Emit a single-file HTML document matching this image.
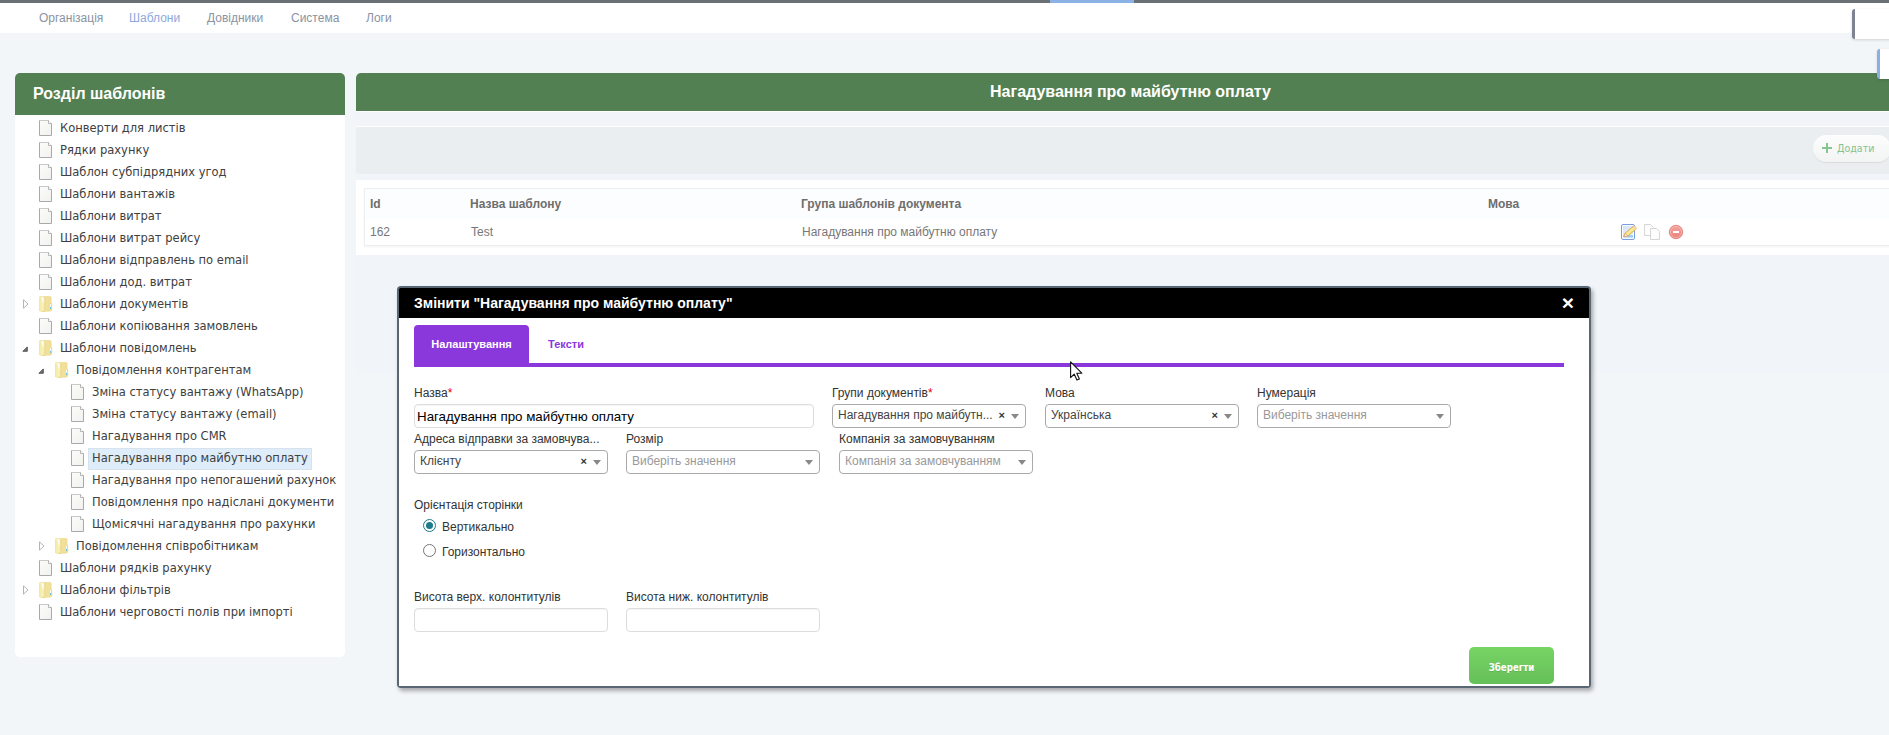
<!DOCTYPE html>
<html lang="uk">
<head>
<meta charset="utf-8">
<title>Шаблони</title>
<style>
*{box-sizing:border-box}
html,body{margin:0;padding:0}
body{width:1889px;height:735px;overflow:hidden;background:#f3f6f9;font-family:"Liberation Sans",sans-serif;font-size:12px;color:#333;position:relative}
.abs{position:absolute}
#topbar{left:0;top:0;width:1889px;height:3px;background:#6b7075}
#topbar i{position:absolute;left:1050px;top:0;width:84px;height:3px;background:#8bb2e5}
#nav{left:0;top:3px;width:1889px;height:30px;background:#fff}
#nav a{position:absolute;top:0;line-height:30px;font-size:12px;color:#8a93a3;text-decoration:none;white-space:nowrap}
#nav a.act{color:#8ea7dc}
#box1{z-index:5;left:1852px;top:9px;width:60px;height:30px;background:#fff;border-left:3px solid #7d8390;border-radius:3px 0 0 3px;box-shadow:0 1px 3px rgba(0,0,0,.15)}
#box2{z-index:5;left:1877px;top:49px;width:60px;height:30px;background:#fff;border-left:3px solid #8aaee8;border-radius:3px 0 0 3px;box-shadow:0 1px 3px rgba(0,0,0,.12)}
/* left panel */
#lp{left:15px;top:73px;width:330px;height:584px;background:#fff;border-radius:5px}
#lph{left:0;top:0;width:330px;height:42px;background:#528052;border-radius:5px 5px 0 0;color:#fff;font-weight:bold;font-size:16px;line-height:41px;padding-left:18px}
.tr{position:absolute;height:22px;line-height:22px;font-family:"DejaVu Sans Condensed","DejaVu Sans",sans-serif;font-size:12.8px;color:#404040;white-space:nowrap}
.tr span{display:block;height:22px;line-height:18px;padding:0 3px 0 3px;border:1px solid transparent}
.tr span.sel{background:#deedf9;border-color:#d6e3ee}
.fi{position:absolute;width:13px;height:16px}
.fo{position:absolute;width:14px;height:17px}
.ar{position:absolute;width:6px;height:10px}
/* right */
#rh{left:356px;top:73px;width:1548px;height:38px;background:#528052;border-radius:5px 5px 0 0;color:#fff;font-weight:bold;font-size:16px;line-height:37px;text-align:center;padding-left:1px;box-shadow:0 1px 0 #fff}
#rp{left:356px;top:112px;width:1548px;height:261px;background:#f1f4f8}
#tb{left:356px;top:126px;width:1548px;height:47px;background:#eaeef1;border-top:1px solid #fff;border-radius:3px;box-shadow:0 1px 1px rgba(0,0,0,.03)}
#add{left:1813px;top:135px;width:78px;height:27px;border-radius:14px;background:linear-gradient(#fdfdfd,#f2f3f3);box-shadow:0 1px 1px rgba(0,0,0,.08);font-family:"DejaVu Sans Condensed","DejaVu Sans",sans-serif;font-size:10.6px;color:#86c28e;line-height:27px;padding-left:24px;white-space:nowrap}
#add:before{content:"";position:absolute;left:9px;top:12px;width:10px;height:2px;background:#86c58d}
#add:after{content:"";position:absolute;left:13px;top:8px;width:2px;height:10px;background:#86c58d}
#tc{left:356px;top:180px;width:1548px;height:75px;background:#fff}
#tbl{left:364px;top:188px;width:1540px;height:58px;background:#fff;border:1px solid #eceef0;box-shadow:0 1px 2px rgba(0,0,0,.05)}
#th{left:0;top:0;width:100%;height:30px;background:#fcfdfe}
.hc{position:absolute;top:0;line-height:31px;font-weight:bold;font-size:12px;color:#6e6e6e}
.dc{position:absolute;top:30px;line-height:27px;font-size:12px;color:#777}
/* modal */
#md{left:397px;top:286px;width:1194px;height:402px;background:#586773;border-radius:4px;box-shadow:2px 3px 4px rgba(0,0,0,.32)}
#mb{left:2px;top:2px;width:1190px;height:398px;background:#fff}
#mh{left:2px;top:2px;width:1190px;height:30px;background:#000;border-radius:1px 1px 0 0;color:#fff;font-weight:bold;font-size:14px;line-height:30px;padding-left:15px}
#cls{left:1558px;top:291px;width:20px;height:24px;line-height:24px;text-align:center;color:#fff;font-weight:bold;font-size:21px}
#tab1{left:414px;top:325px;width:115px;height:40px;background:#8a38db;border-radius:4px 4px 0 0;color:#fff;font-weight:bold;font-size:11px;line-height:38px;text-align:center}
#tab2{left:548px;top:325px;height:38px;line-height:38px;color:#8a38db;font-weight:bold;font-size:11px}
#tline{left:414px;top:363px;width:1150px;height:4px;background:#8a38db}
.lb{position:absolute;font-size:12px;color:#333;white-space:nowrap;line-height:14px}
.lb b{color:#e00;font-weight:normal}
.inp{position:absolute;height:24px;border:1px solid #ddd;border-radius:4px;background:#fff;box-shadow:inset 0 1px 1px rgba(0,0,0,.04);font-size:13.33px;line-height:23px;color:#000;padding-left:2px;white-space:nowrap}
.s2{position:absolute;width:194px;height:24px;border:1px solid #aaa;border-radius:4px;background:#fff;font-size:12px;line-height:20px;color:#444;padding-left:5px;white-space:nowrap}
.s2.ph{color:#999}
.s2 u{position:absolute;right:6px;top:9px;width:0;height:0;border-left:4px solid transparent;border-right:4px solid transparent;border-top:5px solid #888}
.s2 em{position:absolute;right:20px;top:0;font-style:normal;font-weight:bold;font-size:11px;color:#333;line-height:20px}
.rd{position:absolute;width:13px;height:13px;border-radius:50%;border:1px solid #767676;background:#fff}
.rd.on{border-color:#1d7a8c}
.rd.on:after{content:"";position:absolute;left:2px;top:2px;width:7px;height:7px;border-radius:50%;background:#1d7a8c}
#save{left:1469px;top:647px;width:85px;height:37px;border-radius:5px;background:linear-gradient(#77d464,#66bf59);color:#fff;font-family:"DejaVu Sans Condensed","DejaVu Sans",sans-serif;font-weight:bold;font-size:9.6px;line-height:41px;text-align:center;text-shadow:0 1px 0 rgba(0,0,0,.1)}
</style>
</head>
<body>
<div id="topbar" class="abs"><i></i></div>
<div id="nav" class="abs">
<a style="left:39px">Організація</a>
<a class="act" style="left:129px">Шаблони</a>
<a style="left:207px">Довідники</a>
<a style="left:291px">Система</a>
<a style="left:366px">Логи</a>
</div>
<div id="box1" class="abs"></div>
<div id="box2" class="abs"></div>

<div id="lp" class="abs">
<div id="lph" class="abs">Розділ шаблонів</div>
<!--TREE-START-->
<svg width="0" height="0" style="position:absolute"><defs><linearGradient id="gf" x1="0" y1="0" x2="1" y2="1"><stop offset="0" stop-color="#fcfcfb"/><stop offset="1" stop-color="#f1f1ee"/></linearGradient><linearGradient id="gd" x1="0" y1="0" x2="1" y2="0"><stop offset="0" stop-color="#f4e9a6"/><stop offset=".3" stop-color="#f9f1b6"/><stop offset=".5" stop-color="#f1e29c"/><stop offset="1" stop-color="#f0de97"/></linearGradient></defs></svg>
<svg class="fi" style="left:24px;top:47px" viewBox="0 0 13 16"><path d="M.5 .5H9.5L12.5 3.5V15.5H.5Z" fill="url(#gf)" stroke="#a9a9a9"/><path d="M.5 .5H9.5L12.5 3.5" fill="none" stroke="#c9c9c9"/><path d="M9.5 .5V3.5H12.5" fill="#fff" stroke="#b5b5b5"/></svg>
<div class="tr" style="left:41px;top:45px"><span>Конверти для листів</span></div>
<svg class="fi" style="left:24px;top:69px" viewBox="0 0 13 16"><path d="M.5 .5H9.5L12.5 3.5V15.5H.5Z" fill="url(#gf)" stroke="#a9a9a9"/><path d="M.5 .5H9.5L12.5 3.5" fill="none" stroke="#c9c9c9"/><path d="M9.5 .5V3.5H12.5" fill="#fff" stroke="#b5b5b5"/></svg>
<div class="tr" style="left:41px;top:67px"><span>Рядки рахунку</span></div>
<svg class="fi" style="left:24px;top:91px" viewBox="0 0 13 16"><path d="M.5 .5H9.5L12.5 3.5V15.5H.5Z" fill="url(#gf)" stroke="#a9a9a9"/><path d="M.5 .5H9.5L12.5 3.5" fill="none" stroke="#c9c9c9"/><path d="M9.5 .5V3.5H12.5" fill="#fff" stroke="#b5b5b5"/></svg>
<div class="tr" style="left:41px;top:89px"><span>Шаблон субпідрядних угод</span></div>
<svg class="fi" style="left:24px;top:113px" viewBox="0 0 13 16"><path d="M.5 .5H9.5L12.5 3.5V15.5H.5Z" fill="url(#gf)" stroke="#a9a9a9"/><path d="M.5 .5H9.5L12.5 3.5" fill="none" stroke="#c9c9c9"/><path d="M9.5 .5V3.5H12.5" fill="#fff" stroke="#b5b5b5"/></svg>
<div class="tr" style="left:41px;top:111px"><span>Шаблони вантажів</span></div>
<svg class="fi" style="left:24px;top:135px" viewBox="0 0 13 16"><path d="M.5 .5H9.5L12.5 3.5V15.5H.5Z" fill="url(#gf)" stroke="#a9a9a9"/><path d="M.5 .5H9.5L12.5 3.5" fill="none" stroke="#c9c9c9"/><path d="M9.5 .5V3.5H12.5" fill="#fff" stroke="#b5b5b5"/></svg>
<div class="tr" style="left:41px;top:133px"><span>Шаблони витрат</span></div>
<svg class="fi" style="left:24px;top:157px" viewBox="0 0 13 16"><path d="M.5 .5H9.5L12.5 3.5V15.5H.5Z" fill="url(#gf)" stroke="#a9a9a9"/><path d="M.5 .5H9.5L12.5 3.5" fill="none" stroke="#c9c9c9"/><path d="M9.5 .5V3.5H12.5" fill="#fff" stroke="#b5b5b5"/></svg>
<div class="tr" style="left:41px;top:155px"><span>Шаблони витрат рейсу</span></div>
<svg class="fi" style="left:24px;top:179px" viewBox="0 0 13 16"><path d="M.5 .5H9.5L12.5 3.5V15.5H.5Z" fill="url(#gf)" stroke="#a9a9a9"/><path d="M.5 .5H9.5L12.5 3.5" fill="none" stroke="#c9c9c9"/><path d="M9.5 .5V3.5H12.5" fill="#fff" stroke="#b5b5b5"/></svg>
<div class="tr" style="left:41px;top:177px"><span>Шаблони відправлень по email</span></div>
<svg class="fi" style="left:24px;top:201px" viewBox="0 0 13 16"><path d="M.5 .5H9.5L12.5 3.5V15.5H.5Z" fill="url(#gf)" stroke="#a9a9a9"/><path d="M.5 .5H9.5L12.5 3.5" fill="none" stroke="#c9c9c9"/><path d="M9.5 .5V3.5H12.5" fill="#fff" stroke="#b5b5b5"/></svg>
<div class="tr" style="left:41px;top:199px"><span>Шаблони дод. витрат</span></div>
<svg class="fo" style="left:24px;top:223px" viewBox="0 0 14 17"><rect x="11" y="7" width="2.2" height="7.5" rx=".8" fill="#ecd88a"/><rect x=".2" y=".3" width="12" height="15" rx="1.6" fill="url(#gd)" stroke="#ead68a" stroke-width=".5"/><rect x="3.2" y="15" width="3" height="1" rx=".4" fill="#ead68a"/><rect x="5.6" y="1" width=".9" height="14" fill="#e6d48c" opacity=".7"/><path d="M2.3 1.2L4.6 1.4V7.2L4 7.2Z" fill="#fff" opacity=".95"/><rect x="11" y="8" width="1.1" height="3" fill="#fbfbf6"/><rect x="11" y="11" width="1.1" height="2" fill="#6cc3e6"/></svg>
<svg class="ar" style="left:7.5px;top:226px" viewBox="0 0 6 10"><path d="M.5 .8L5 5L.5 9.2Z" fill="#fff" stroke="#b4b4b4" stroke-width="1"/></svg>
<div class="tr" style="left:41px;top:221px"><span>Шаблони документів</span></div>
<svg class="fi" style="left:24px;top:245px" viewBox="0 0 13 16"><path d="M.5 .5H9.5L12.5 3.5V15.5H.5Z" fill="url(#gf)" stroke="#a9a9a9"/><path d="M.5 .5H9.5L12.5 3.5" fill="none" stroke="#c9c9c9"/><path d="M9.5 .5V3.5H12.5" fill="#fff" stroke="#b5b5b5"/></svg>
<div class="tr" style="left:41px;top:243px"><span>Шаблони копіювання замовлень</span></div>
<svg class="fo" style="left:24px;top:267px" viewBox="0 0 14 17"><rect x="11" y="7" width="2.2" height="7.5" rx=".8" fill="#ecd88a"/><rect x=".2" y=".3" width="12" height="15" rx="1.6" fill="url(#gd)" stroke="#ead68a" stroke-width=".5"/><rect x="3.2" y="15" width="3" height="1" rx=".4" fill="#ead68a"/><rect x="5.6" y="1" width=".9" height="14" fill="#e6d48c" opacity=".7"/><path d="M2.3 1.2L4.6 1.4V7.2L4 7.2Z" fill="#fff" opacity=".95"/><rect x="11" y="8" width="1.1" height="3" fill="#fbfbf6"/><rect x="11" y="11" width="1.1" height="2" fill="#6cc3e6"/></svg>
<svg class="ar" style="left:7px;top:272.5px;width:6px;height:6px" viewBox="0 0 6 6"><path d="M5.3 .9V5.3H.9Z" fill="#777" stroke="#3c3c3c" stroke-width=".8" stroke-linejoin="round"/></svg>
<div class="tr" style="left:41px;top:265px"><span>Шаблони повідомлень</span></div>
<svg class="fo" style="left:40px;top:289px" viewBox="0 0 14 17"><rect x="11" y="7" width="2.2" height="7.5" rx=".8" fill="#ecd88a"/><rect x=".2" y=".3" width="12" height="15" rx="1.6" fill="url(#gd)" stroke="#ead68a" stroke-width=".5"/><rect x="3.2" y="15" width="3" height="1" rx=".4" fill="#ead68a"/><rect x="5.6" y="1" width=".9" height="14" fill="#e6d48c" opacity=".7"/><path d="M2.3 1.2L4.6 1.4V7.2L4 7.2Z" fill="#fff" opacity=".95"/><rect x="11" y="8" width="1.1" height="3" fill="#fbfbf6"/><rect x="11" y="11" width="1.1" height="2" fill="#6cc3e6"/></svg>
<svg class="ar" style="left:23px;top:294.5px;width:6px;height:6px" viewBox="0 0 6 6"><path d="M5.3 .9V5.3H.9Z" fill="#777" stroke="#3c3c3c" stroke-width=".8" stroke-linejoin="round"/></svg>
<div class="tr" style="left:57px;top:287px"><span>Повідомлення контрагентам</span></div>
<svg class="fi" style="left:56px;top:311px" viewBox="0 0 13 16"><path d="M.5 .5H9.5L12.5 3.5V15.5H.5Z" fill="url(#gf)" stroke="#a9a9a9"/><path d="M.5 .5H9.5L12.5 3.5" fill="none" stroke="#c9c9c9"/><path d="M9.5 .5V3.5H12.5" fill="#fff" stroke="#b5b5b5"/></svg>
<div class="tr" style="left:73px;top:309px"><span>Зміна статусу вантажу (WhatsApp)</span></div>
<svg class="fi" style="left:56px;top:333px" viewBox="0 0 13 16"><path d="M.5 .5H9.5L12.5 3.5V15.5H.5Z" fill="url(#gf)" stroke="#a9a9a9"/><path d="M.5 .5H9.5L12.5 3.5" fill="none" stroke="#c9c9c9"/><path d="M9.5 .5V3.5H12.5" fill="#fff" stroke="#b5b5b5"/></svg>
<div class="tr" style="left:73px;top:331px"><span>Зміна статусу вантажу (email)</span></div>
<svg class="fi" style="left:56px;top:355px" viewBox="0 0 13 16"><path d="M.5 .5H9.5L12.5 3.5V15.5H.5Z" fill="url(#gf)" stroke="#a9a9a9"/><path d="M.5 .5H9.5L12.5 3.5" fill="none" stroke="#c9c9c9"/><path d="M9.5 .5V3.5H12.5" fill="#fff" stroke="#b5b5b5"/></svg>
<div class="tr" style="left:73px;top:353px"><span>Нагадування про CMR</span></div>
<svg class="fi" style="left:56px;top:377px" viewBox="0 0 13 16"><path d="M.5 .5H9.5L12.5 3.5V15.5H.5Z" fill="url(#gf)" stroke="#a9a9a9"/><path d="M.5 .5H9.5L12.5 3.5" fill="none" stroke="#c9c9c9"/><path d="M9.5 .5V3.5H12.5" fill="#fff" stroke="#b5b5b5"/></svg>
<div class="tr" style="left:73px;top:375px"><span class="sel">Нагадування про майбутню оплату</span></div>
<svg class="fi" style="left:56px;top:399px" viewBox="0 0 13 16"><path d="M.5 .5H9.5L12.5 3.5V15.5H.5Z" fill="url(#gf)" stroke="#a9a9a9"/><path d="M.5 .5H9.5L12.5 3.5" fill="none" stroke="#c9c9c9"/><path d="M9.5 .5V3.5H12.5" fill="#fff" stroke="#b5b5b5"/></svg>
<div class="tr" style="left:73px;top:397px"><span>Нагадування про непогашений рахунок</span></div>
<svg class="fi" style="left:56px;top:421px" viewBox="0 0 13 16"><path d="M.5 .5H9.5L12.5 3.5V15.5H.5Z" fill="url(#gf)" stroke="#a9a9a9"/><path d="M.5 .5H9.5L12.5 3.5" fill="none" stroke="#c9c9c9"/><path d="M9.5 .5V3.5H12.5" fill="#fff" stroke="#b5b5b5"/></svg>
<div class="tr" style="left:73px;top:419px"><span>Повідомлення про надіслані документи</span></div>
<svg class="fi" style="left:56px;top:443px" viewBox="0 0 13 16"><path d="M.5 .5H9.5L12.5 3.5V15.5H.5Z" fill="url(#gf)" stroke="#a9a9a9"/><path d="M.5 .5H9.5L12.5 3.5" fill="none" stroke="#c9c9c9"/><path d="M9.5 .5V3.5H12.5" fill="#fff" stroke="#b5b5b5"/></svg>
<div class="tr" style="left:73px;top:441px"><span>Щомісячні нагадування про рахунки</span></div>
<svg class="fo" style="left:40px;top:465px" viewBox="0 0 14 17"><rect x="11" y="7" width="2.2" height="7.5" rx=".8" fill="#ecd88a"/><rect x=".2" y=".3" width="12" height="15" rx="1.6" fill="url(#gd)" stroke="#ead68a" stroke-width=".5"/><rect x="3.2" y="15" width="3" height="1" rx=".4" fill="#ead68a"/><rect x="5.6" y="1" width=".9" height="14" fill="#e6d48c" opacity=".7"/><path d="M2.3 1.2L4.6 1.4V7.2L4 7.2Z" fill="#fff" opacity=".95"/><rect x="11" y="8" width="1.1" height="3" fill="#fbfbf6"/><rect x="11" y="11" width="1.1" height="2" fill="#6cc3e6"/></svg>
<svg class="ar" style="left:23.5px;top:468px" viewBox="0 0 6 10"><path d="M.5 .8L5 5L.5 9.2Z" fill="#fff" stroke="#b4b4b4" stroke-width="1"/></svg>
<div class="tr" style="left:57px;top:463px"><span>Повідомлення співробітникам</span></div>
<svg class="fi" style="left:24px;top:487px" viewBox="0 0 13 16"><path d="M.5 .5H9.5L12.5 3.5V15.5H.5Z" fill="url(#gf)" stroke="#a9a9a9"/><path d="M.5 .5H9.5L12.5 3.5" fill="none" stroke="#c9c9c9"/><path d="M9.5 .5V3.5H12.5" fill="#fff" stroke="#b5b5b5"/></svg>
<div class="tr" style="left:41px;top:485px"><span>Шаблони рядків рахунку</span></div>
<svg class="fo" style="left:24px;top:509px" viewBox="0 0 14 17"><rect x="11" y="7" width="2.2" height="7.5" rx=".8" fill="#ecd88a"/><rect x=".2" y=".3" width="12" height="15" rx="1.6" fill="url(#gd)" stroke="#ead68a" stroke-width=".5"/><rect x="3.2" y="15" width="3" height="1" rx=".4" fill="#ead68a"/><rect x="5.6" y="1" width=".9" height="14" fill="#e6d48c" opacity=".7"/><path d="M2.3 1.2L4.6 1.4V7.2L4 7.2Z" fill="#fff" opacity=".95"/><rect x="11" y="8" width="1.1" height="3" fill="#fbfbf6"/><rect x="11" y="11" width="1.1" height="2" fill="#6cc3e6"/></svg>
<svg class="ar" style="left:7.5px;top:512px" viewBox="0 0 6 10"><path d="M.5 .8L5 5L.5 9.2Z" fill="#fff" stroke="#b4b4b4" stroke-width="1"/></svg>
<div class="tr" style="left:41px;top:507px"><span>Шаблони фільтрів</span></div>
<svg class="fi" style="left:24px;top:531px" viewBox="0 0 13 16"><path d="M.5 .5H9.5L12.5 3.5V15.5H.5Z" fill="url(#gf)" stroke="#a9a9a9"/><path d="M.5 .5H9.5L12.5 3.5" fill="none" stroke="#c9c9c9"/><path d="M9.5 .5V3.5H12.5" fill="#fff" stroke="#b5b5b5"/></svg>
<div class="tr" style="left:41px;top:529px"><span>Шаблони черговості полів при імпорті</span></div>
<!--TREE-END-->
</div>

<div id="rh" class="abs">Нагадування про майбутню оплату</div>
<div id="rp" class="abs"></div>
<div id="tb" class="abs"></div>
<div id="add" class="abs">Додати</div>
<div id="tc" class="abs"></div>
<div id="tbl" class="abs">
<div id="th" class="abs"></div>
<div class="hc" style="left:5px">Id</div>
<div class="hc" style="left:105px">Назва шаблону</div>
<div class="hc" style="left:436px">Група шаблонів документа</div>
<div class="hc" style="left:1123px">Мова</div>
<div class="dc" style="left:5px">162</div>
<div class="dc" style="left:106px">Test</div>
<div class="dc" style="left:437px">Нагадування про майбутню оплату</div>
</div>

<svg class="abs" style="left:1620px;top:223px" width="18" height="18" viewBox="0 0 18 18">
<defs><linearGradient id="ge" x1="0" y1="0" x2="1" y2="1"><stop offset="0" stop-color="#cfe2fb"/><stop offset="1" stop-color="#eef5fe"/></linearGradient></defs>
<rect x="1.5" y="1.5" width="13" height="15" rx="1.5" fill="#fff" stroke="#7b9fdc"/>
<rect x="3" y="3" width="10" height="9" fill="url(#ge)"/>
<rect x="3" y="12" width="10" height="2.6" fill="#9ccff9"/>
<path d="M4.2 13.7L5.2 10L13 3.5Q14.8 2.6 15.7 4.1Q16.4 5.3 15.6 6.5L7.9 13.1Z" fill="#f6e27c" stroke="#dba45c" stroke-width=".9" stroke-linejoin="round"/>
<path d="M6.4 11.4L14 4.9" stroke="#fbf0a8" stroke-width="1.1" fill="none"/>
<path d="M4.2 13.7L5.2 10L7.9 13.1Z" fill="#fbe9dc" stroke="#d9a066" stroke-width=".6" stroke-linejoin="round"/>
<path d="M13 3.5Q14.8 2.6 15.7 4.1Q16.4 5.3 15.6 6.5Z" fill="#fbeee6" stroke="#e2b27a" stroke-width=".5"/>
</svg>
<svg class="abs" style="left:1643px;top:223px;opacity:.6" width="18" height="18" viewBox="0 0 18 18">
<path d="M1.5 1.5H7.5L10.5 4.5V12.5H1.5Z" fill="#fcfcfc" stroke="#b4b4b4" stroke-width=".9"/>
<path d="M7.5 5.5H13.5L16.5 8.5V16.5H7.5Z" fill="#fcfcfc" stroke="#b4b4b4" stroke-width=".9"/>
</svg>
<svg class="abs" style="left:1668px;top:224px" width="16" height="16" viewBox="0 0 16 16">
<defs><linearGradient id="gr" x1="0" y1="0" x2="0" y2="1"><stop offset="0" stop-color="#f3a39c"/><stop offset="1" stop-color="#ea827a"/></linearGradient></defs>
<circle cx="8" cy="8" r="6.7" fill="url(#gr)" stroke="#e27e77" stroke-width=".9"/>
<circle cx="8" cy="8" r="5.6" fill="none" stroke="#f8c6c1" stroke-width=".6"/>
<rect x="5" y="7" width="6" height="2" fill="#fff"/>
</svg>
<div id="md" class="abs"><div id="mb" class="abs"></div><div id="mh" class="abs">Змінити "Нагадування про майбутню оплату"</div></div>
<div id="cls" class="abs">×</div>
<div id="tab1" class="abs">Налаштування</div>
<div id="tab2" class="abs">Тексти</div>
<div id="tline" class="abs"></div>

<div class="lb" style="left:414px;top:386px">Назва<b>*</b></div>
<div class="inp" style="left:414px;top:404px;width:400px">Нагадування про майбутню оплату</div>
<div class="lb" style="left:832px;top:386px">Групи документів<b>*</b></div>
<div class="s2" style="left:832px;top:404px">Нагадування про майбутн...<em>×</em><u></u></div>
<div class="lb" style="left:1045px;top:386px">Мова</div>
<div class="s2" style="left:1045px;top:404px">Українська<em>×</em><u></u></div>
<div class="lb" style="left:1257px;top:386px">Нумерація</div>
<div class="s2 ph" style="left:1257px;top:404px">Виберіть значення<u></u></div>

<div class="lb" style="left:414px;top:432px">Адреса відправки за замовчува...</div>
<div class="s2" style="left:414px;top:450px">Клієнту<em>×</em><u></u></div>
<div class="lb" style="left:626px;top:432px">Розмір</div>
<div class="s2 ph" style="left:626px;top:450px">Виберіть значення<u></u></div>
<div class="lb" style="left:839px;top:432px">Компанія за замовчуванням</div>
<div class="s2 ph" style="left:839px;top:450px">Компанія за замовчуванням<u></u></div>

<div class="lb" style="left:414px;top:498px">Орієнтація сторінки</div>
<div class="rd on" style="left:422.5px;top:519px"></div>
<div class="lb" style="left:442px;top:520px">Вертикально</div>
<div class="rd" style="left:422.5px;top:544px"></div>
<div class="lb" style="left:442px;top:545px">Горизонтально</div>

<div class="lb" style="left:414px;top:590px">Висота верх. колонтитулів</div>
<div class="inp" style="left:414px;top:608px;width:194px"></div>
<div class="lb" style="left:626px;top:590px">Висота ниж. колонтитулів</div>
<div class="inp" style="left:626px;top:608px;width:194px"></div>

<svg class="abs" style="left:1070px;top:361px" width="14" height="21" viewBox="0 0 14 21"><path d="M.6 .9V16.6L4.2 13.1L6.9 19L9.4 17.9L6.8 12.2H11.8Z" fill="#fff" stroke="#111" stroke-width="1.1" stroke-linejoin="round"/></svg>
<div id="save" class="abs">Зберегти</div>
</body>
</html>
